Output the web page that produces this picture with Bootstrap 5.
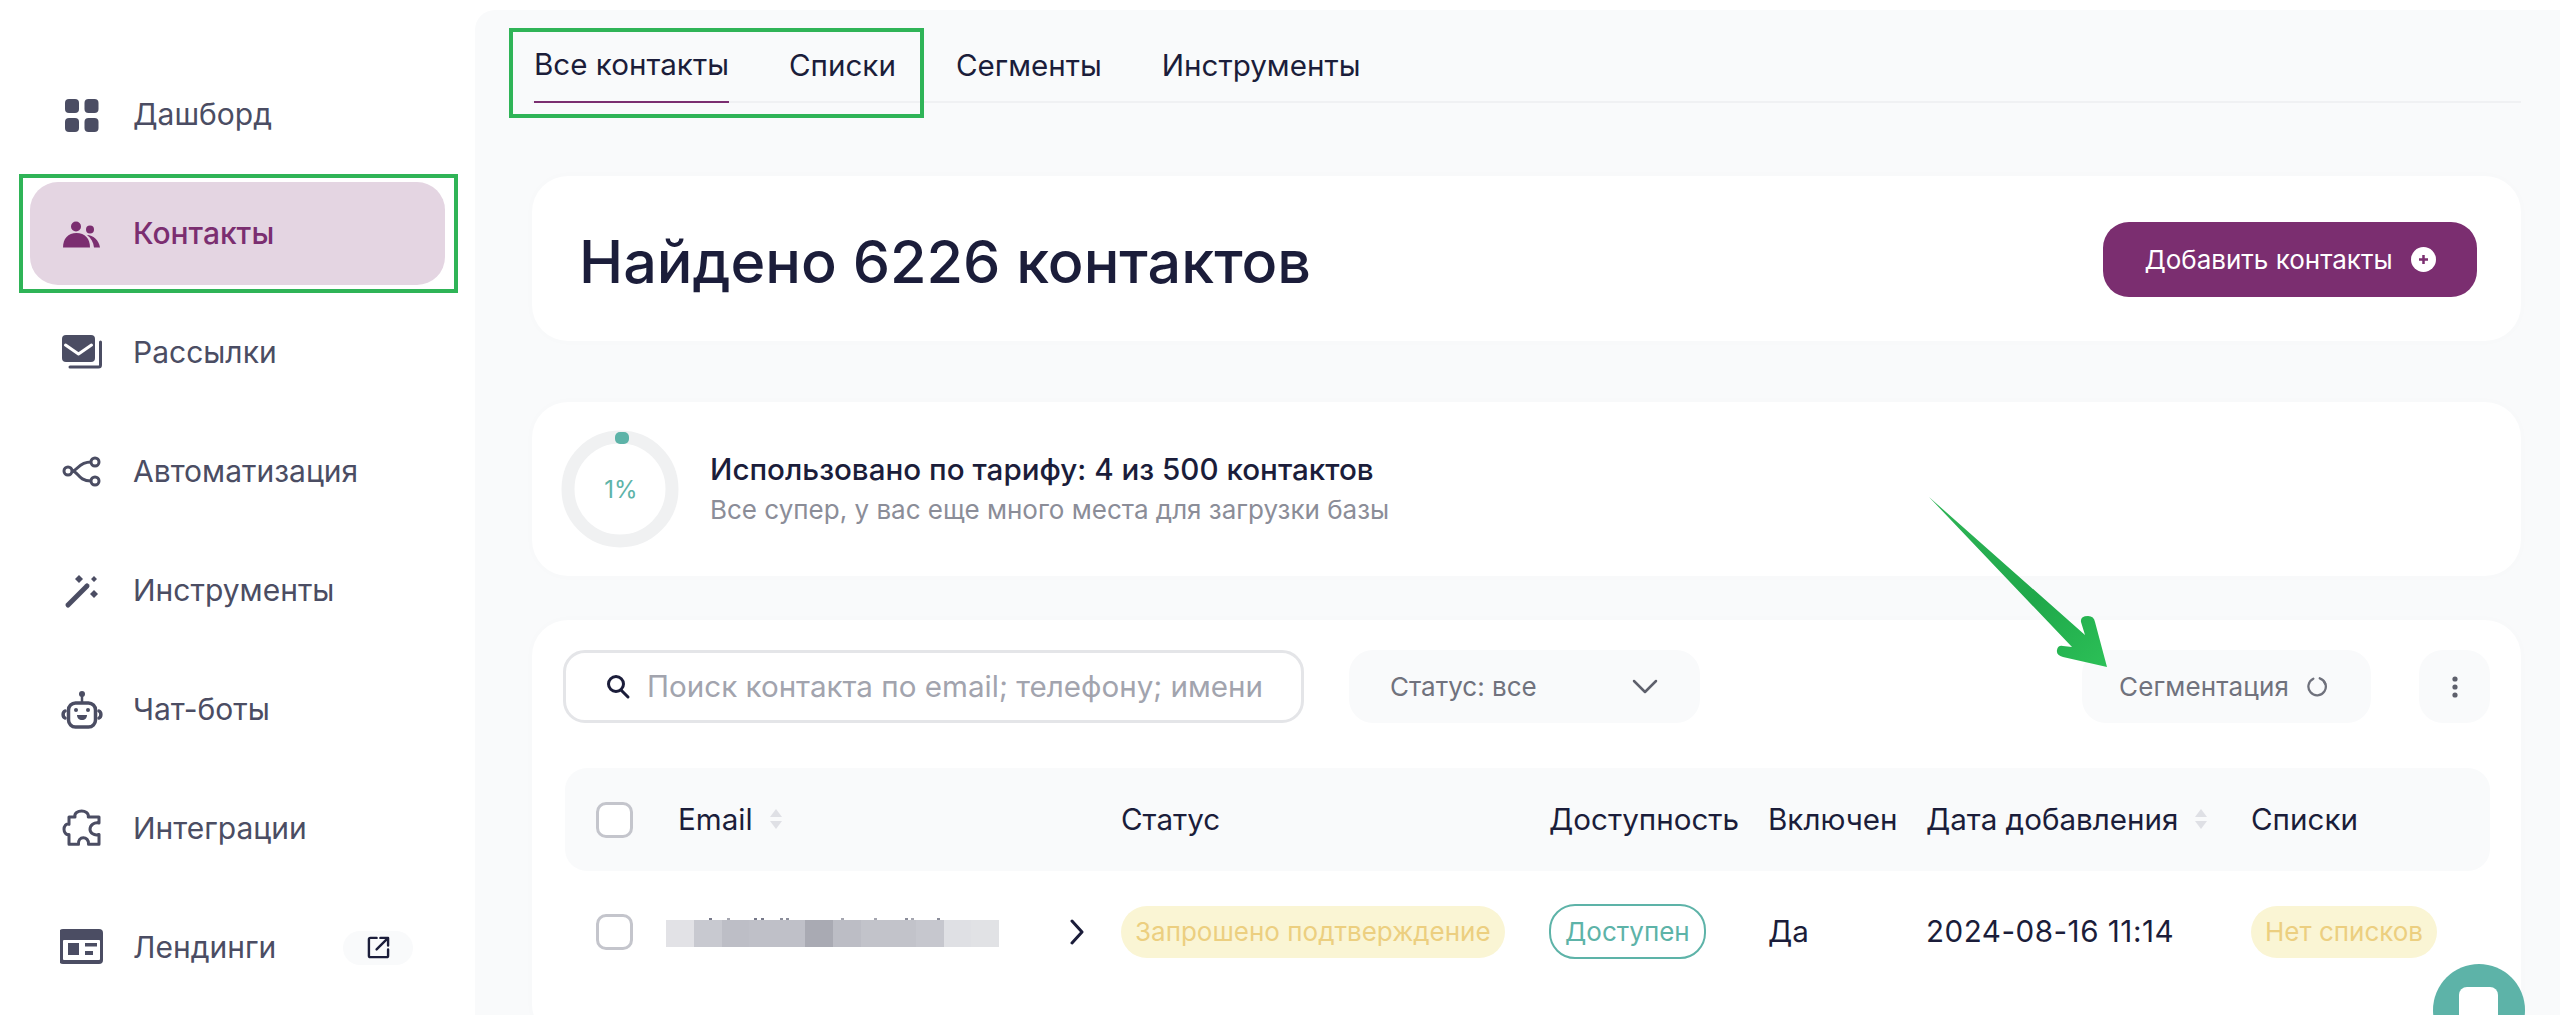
<!DOCTYPE html>
<html lang="ru">
<head>
    <meta charset="UTF-8">
    <meta name="viewport" content="width=device-width, initial-scale=1.0">
    <title>Контакты</title>
    <link href="https://cdn.jsdelivr.net/npm/bootstrap@5.3.0/dist/css/bootstrap.min.css" rel="stylesheet">
    <style>
        html, body { height: 1015px; overflow: hidden; }
        body { font-family: Inter, "Liberation Sans", sans-serif; color: #1b1d3a; background: #fff; position: relative; }
        svg { display: block; flex-shrink: 0; }

        .app-side { width: 475px; flex-shrink: 0; padding: 63px 30px 0; }
        .side-link { height: 103px; margin-bottom: 16px; padding-left: 30px; border-radius: 28px; color: #4b4d63; font-size: 30px; text-decoration: none; }
        .side-link.active-link { background: #e4d5e2; color: #7b2e70; font-weight: 500; }
        .side-ico { width: 44px; height: 44px; margin-right: 29px; color: #4b4d63; }
        .active-link .side-ico { color: #7b2e70; }
        .ext-chip { width: 70px; height: 34px; margin-left: auto; margin-right: 32px; border-radius: 17px; background: #f9fafb; color: #1b1d3a; }

        .app-main { background: #f9fafb; margin-top: 10px; padding: 0 39px 0 57px; border-top-left-radius: 20px; min-width: 0; }
        .tab-row { height: 93px; border-bottom: 2px solid #f0f1f3; gap: 60px; padding-left: 2px; }
        .tab-item { height: 93px; font-size: 29.6px; color: #1b1d3a; text-decoration: none; margin-bottom: -2px; padding-top: 18px; }
        .tab-item.on { border-bottom: 2px solid #7b2e70; }

        .soft-card { border: 0; border-radius: 36px; background: #fff; box-shadow: 0 0 12px rgba(30, 30, 60, .015); }
        .top-card { margin-top: 73px; height: 165px; padding: 0 44px 0 47px; }
        .top-title { font-size: 59.3px; font-weight: 500; margin: 6px 0 0; line-height: 1; }
        .add-btn { width: 374px; height: 75px; margin-top: 1px; border-radius: 26px; background: #7b2e70; border: 0; color: #fff; font-size: 26px; gap: 18px; }
        .add-btn:hover { background: #7b2e70; color: #fff; }

        .plan-card { margin-top: 61px; height: 174px; padding-left: 29px; }
        .donut { width: 118px; height: 118px; margin-right: 31px; }
        .plan-title { font-size: 29.6px; font-weight: 500; line-height: 36px; }
        .plan-note { font-size: 26px; color: #8b8d98; line-height: 36px; margin-top: 5px; }

        .list-card { margin-top: 44px; height: 420px; padding: 30px 31px 0 31px; }
        .tool-row { height: 73px; }
        .search-box { width: 741px; height: 73px; border: 3px solid #e4e5e8; border-radius: 22px; padding-left: 39px; gap: 16px; background: #fff; }
        .search-box input { border: 0; outline: 0; flex: 1; min-width: 0; padding: 0; font-size: 29.6px; background: transparent; color: #1b1d3a; }
        .search-box input::placeholder { color: #a2a4ae; opacity: 1; }
        .status-pick { width: 351px; height: 73px; margin-left: 45px; padding: 0 42px 0 41px; border-radius: 24px; background: #f9fafb; font-size: 26px; color: #70727d; }
        .seg-btn { width: 289px; height: 73px; margin-left: auto; padding-left: 37px; gap: 17px; border: 0; border-radius: 24px; background: #f9fafb; font-size: 26px; letter-spacing: .15px; color: #70727d; }
        .more-btn { width: 71px; height: 73px; margin-left: 48px; border: 0; border-radius: 24px; background: #f9fafb; color: #5e606c; }

        .contact-table { table-layout: fixed; width: 1925px; margin: 45px 0 0 2px; --bs-table-bg: transparent; }
        .contact-table th, .contact-table td { border: 0; padding: 0; vertical-align: middle; font-size: 29.6px; color: #1b1d3a; white-space: nowrap; }
        .contact-table th { height: 103px; background: #f9fafb; font-weight: 400; }
        .contact-table th:first-child { border-radius: 22px 0 0 22px; padding-left: 31px; }
        .contact-table th:last-child { border-radius: 0 22px 22px 0; }
        .contact-table td { height: 118px; padding-top: 3px; }
        .contact-table td:first-child { padding-left: 31px; }
        .date-cell { letter-spacing: .5px; }
        .fake-check { width: 37px; height: 36px; border: 3px solid #c4c5cc; border-radius: 10px; background: #fff; }
        .sort-mark { margin-left: 16px; }
        .mail-row { padding-right: 36px; }
        .mail-blur { position: relative; width: 333px; height: 27px; margin: 3px 0 0 -12px; background: linear-gradient(90deg, #e2e2e6 0 28px, #c8c9d0 28px 56px, #bdbec6 56px 83px, #bfc0c8 83px 139px, #a9aab3 139px 167px, #bcbdc5 167px 195px, #c2c3ca 195px 250px, #c6c7ce 250px 278px, #dfe0e4 278px 305px, #e1e2e5 305px 333px); }
        .mail-blur::before { content: ""; position: absolute; left: 0; right: 0; top: -2px; height: 2px; background: linear-gradient(90deg, transparent 43px, #77798a 43px 46px, transparent 46px 61px, #a5a6b0 61px 64px, transparent 64px 88px, #77798a 88px 91px, transparent 91px 95px, #77798a 95px 98px, transparent 98px 114px, #8b8d9a 114px 117px, transparent 117px 120px, #8b8d9a 120px 123px, transparent 123px 175px, #a5a6b0 175px 178px, transparent 178px 208px, #a5a6b0 208px 211px, transparent 211px 239px, #8b8d9a 239px 242px, transparent 242px 245px, #a5a6b0 245px 248px, transparent 248px 271px, #8b8d9a 271px 274px, transparent 274px); }
        .state-pill { height: 52px; padding: 0 14px; border-radius: 26px; font-size: 26px; font-weight: 400; }
        .state-wait { background: #faf5d4; color: #eccf80; }
        .state-ok { height: 55px; border: 2px solid #5db3a8; background: #fff; color: #5db3a8; padding: 0 14px; }

        .chat-bubble { position: absolute; left: 2433px; top: 964px; width: 92px; height: 92px; border-radius: 50%; background: #5db3a8; }
        .chat-bubble::after { content: ""; position: absolute; left: 26px; top: 23px; width: 39px; height: 46px; border-radius: 8px; background: #fff; }
        .mark-box { position: absolute; border: 4px solid #2fb457; pointer-events: none; }
        .mark-side { left: 19px; top: 174px; width: 439px; height: 119px; }
        .mark-tabs { left: 509px; top: 28px; width: 415px; height: 90px; }
        .mark-arrow { position: absolute; left: 1920px; top: 490px; }
    </style>
</head>
<body>
    <div class="d-flex h-100">
        <aside class="app-side">
            <a href="#" class="side-link d-flex align-items-center">
                <svg class="side-ico" viewBox="0 0 44 44" fill="currentColor"><rect x="5" y="6" width="14" height="14" rx="4"/><rect x="24.500" y="6" width="14" height="14" rx="4"/><rect x="5" y="25" width="14" height="14" rx="4"/><rect x="24.500" y="25" width="14" height="14" rx="4"/></svg>
                Дашборд
            </a>
            <a href="#" class="side-link active-link d-flex align-items-center">
                <svg class="side-ico" viewBox="0 0 44 44" fill="currentColor"><circle cx="16" cy="14.500" r="5"/><circle cx="30" cy="17.500" r="4"/><path d="M3 35.500c0-9 5-14.500 13.500-14.500S30 26.500 30 35.500z"/><path d="M27 23c6 0 12 5 13 12.500h-6c-.5-5-3-9.500-7-12.500z"/></svg>
                Контакты
            </a>
            <a href="#" class="side-link d-flex align-items-center">
                <svg class="side-ico" viewBox="0 0 44 44" fill="currentColor"><path d="M6 4h25a4 4 0 0 1 4 4v19a4 4 0 0 1-4 4H6a4 4 0 0 1-4-4V8a4 4 0 0 1 4-4z"/><path d="M5.500 14L18.500 23L31.500 14" fill="none" stroke="#fff" stroke-width="3" stroke-linecap="round" stroke-linejoin="round"/><path d="M40.500 11v23a2 2 0 0 1-2 2H10" fill="none" stroke="currentColor" stroke-width="3" stroke-linecap="round"/></svg>
                Рассылки
            </a>
            <a href="#" class="side-link d-flex align-items-center">
                <svg class="side-ico" viewBox="0 0 44 44" fill="none" stroke="currentColor" stroke-width="3"><circle cx="8" cy="21" r="4"/><circle cx="35" cy="12" r="4"/><circle cx="35" cy="31" r="4"/><path d="M12 21c6 0 6-9 19-9M12 21c6 0 6 10 19 10"/></svg>
                Автоматизация
            </a>
            <a href="#" class="side-link d-flex align-items-center">
                <svg class="side-ico" viewBox="0 0 44 44" fill="currentColor"><path d="M8 36L27 17" stroke="currentColor" stroke-width="5" stroke-linecap="round"/><path d="M19 6l4 4-4 4-4-4zM34 7l3 3-3 3-3-3zM34 21l4 4-4 4-4-4z"/></svg>
                Инструменты
            </a>
            <a href="#" class="side-link d-flex align-items-center">
                <svg class="side-ico" viewBox="0 0 44 44" fill="none" stroke="currentColor" stroke-width="3.500"><rect x="8.500" y="15" width="27" height="24" rx="7"/><path d="M22 8v7" stroke-width="2.500"/><circle cx="22" cy="6" r="3" fill="currentColor" stroke="none"/><path d="M5 23c-2.500 1-2.500 6 0 7M39 23c2.500 1 2.500 6 0 7" stroke-linecap="round"/><circle cx="16" cy="22" r="2" fill="currentColor" stroke="none"/><circle cx="28" cy="22" r="2" fill="currentColor" stroke="none"/><path d="M17 27h10c0 3-2 5-5 5s-5-2-5-5z" fill="currentColor" stroke="none"/></svg>
                Чат-боты
            </a>
            <a href="#" class="side-link d-flex align-items-center">
                <svg class="side-ico" viewBox="0 0 44 44" fill="none" stroke="currentColor" stroke-width="3" stroke-linejoin="round"><path d="M9 10H15C14 6 18 4 21.700 4C25 4 29 6 28.300 10H39V16C34 15 30 18 30 22.300C30 26 34 29 39 27.500V37.300H28.500C29 33 26 30.700 23.300 30.700C20.500 30.700 18 33 18.500 37.300H9V27.500C6 28.500 4 25 4 22.300C4 19.500 6 16 9 17.300Z"/></svg>
                Интеграции
            </a>
            <a href="#" class="side-link d-flex align-items-center">
                <svg class="side-ico" viewBox="0 0 44 44" fill="none"><rect x="-1" y="3" width="44" height="35" rx="4" fill="currentColor"/><rect x="3" y="14" width="37" height="20" rx="1" fill="#fff"/><rect x="8" y="17" width="11" height="12" fill="currentColor"/><rect x="25" y="17" width="12" height="3.500" fill="currentColor"/><rect x="25" y="25" width="8" height="4" fill="currentColor"/></svg>
                Лендинги
                <span class="ext-chip d-flex align-items-center justify-content-center">
                    <svg width="23" height="23" viewBox="0 0 24 24" fill="none" stroke="currentColor" stroke-width="2.500" stroke-linecap="round" stroke-linejoin="round"><path d="M10 2H3.500A1.500 1.500 0 0 0 2 3.500v17A1.500 1.500 0 0 0 3.500 22h17a1.500 1.500 0 0 0 1.500-1.500V14"/><path d="M10 14L21 3M14 2h8v8"/></svg>
                </span>
            </a>
        </aside>

        <main class="app-main flex-grow-1">
            <nav class="tab-row d-flex">
                <a href="#" class="tab-item on d-flex align-items-center">Все контакты</a>
                <a href="#" class="tab-item d-flex align-items-center">Списки</a>
                <a href="#" class="tab-item d-flex align-items-center">Сегменты</a>
                <a href="#" class="tab-item d-flex align-items-center">Инструменты</a>
            </nav>

            <section class="card soft-card top-card flex-row align-items-center justify-content-between">
                <h1 class="top-title">Найдено 6226 контактов</h1>
                <button class="btn add-btn d-flex align-items-center justify-content-center">
                    Добавить контакты
                    <svg width="25" height="25" viewBox="0 0 25 25"><circle cx="12.500" cy="12.500" r="12.500" fill="#fff"/><path d="M12.500 8v9M8 12.500h9" stroke="#7b2e70" stroke-width="2.500"/></svg>
                </button>
            </section>

            <section class="card soft-card plan-card flex-row align-items-center">
                <svg class="donut" viewBox="0 0 118 118">
                    <circle cx="59" cy="59" r="52" fill="none" stroke="#f0f1f2" stroke-width="13"/>
                    <rect x="54" y="2" width="14" height="12" rx="5" fill="#5db3a8"/>
                    <text x="60" y="68" text-anchor="middle" font-size="24" fill="#5db3a8">1%</text>
                </svg>
                <div>
                    <div class="plan-title">Использовано по тарифу: 4 из 500 контактов</div>
                    <div class="plan-note">Все супер, у вас еще много места для загрузки базы</div>
                </div>
            </section>

            <section class="card soft-card list-card">
                <div class="tool-row d-flex align-items-center">
                    <label class="search-box d-flex align-items-center m-0">
                        <svg width="26" height="26" viewBox="0 0 26 26" fill="none" stroke="#1b1d3a" stroke-width="3" stroke-linecap="round"><circle cx="11" cy="10" r="7.500"/><path d="M16 16l7 7"/></svg>
                        <input type="text" placeholder="Поиск контакта по email; телефону; имени">
                    </label>
                    <div class="status-pick d-flex align-items-center justify-content-between">
                        Статус: все
                        <svg width="26" height="15" viewBox="0 0 26 15" fill="none" stroke="#5e606c" stroke-width="2.500" stroke-linecap="round" stroke-linejoin="round"><path d="M2 2l11 11L24 2"/></svg>
                    </div>
                    <button class="seg-btn d-flex align-items-center">
                        Сегментация
                        <svg width="22" height="22" viewBox="0 0 24 24" fill="none" stroke="#6f717c" stroke-width="2.500" stroke-linecap="round"><path d="M15 2.500a9.500 9.500 0 1 1-7 .5"/><path d="M19.500 6l1.500 2.500"/></svg>
                    </button>
                    <button class="more-btn d-flex align-items-center justify-content-center">
                        <svg width="6" height="24" viewBox="0 0 6 24" fill="currentColor"><circle cx="3" cy="4" r="2.600"/><circle cx="3" cy="12" r="2.600"/><circle cx="3" cy="20" r="2.600"/></svg>
                    </button>
                </div>

                <table class="table contact-table">
                    <colgroup><col style="width:113px"><col style="width:443px"><col style="width:428px"><col style="width:219px"><col style="width:158px"><col style="width:325px"><col style="width:239px"></colgroup>
                    <thead>
                        <tr>
                            <th><div class="fake-check"></div></th>
                            <th><span class="d-inline-flex align-items-center">Email
                                <svg class="sort-mark" width="14" height="24" viewBox="0 0 14 24" fill="#dfe0e5"><path d="M7 2l6 8H1zM7 22l-6-8h12z"/></svg></span></th>
                            <th>Статус</th>
                            <th>Доступность</th>
                            <th>Включен</th>
                            <th><span class="d-inline-flex align-items-center">Дата добавления
                                <svg class="sort-mark" width="14" height="24" viewBox="0 0 14 24" fill="#dfe0e5"><path d="M7 2l6 8H1zM7 22l-6-8h12z"/></svg></span></th>
                            <th>Списки</th>
                        </tr>
                    </thead>
                    <tbody>
                        <tr>
                            <td><div class="fake-check"></div></td>
                            <td>
                                <div class="mail-row d-flex align-items-center justify-content-between">
                                    <div class="mail-blur"></div>
                                    <svg width="16" height="26" viewBox="0 0 16 26" fill="none" stroke="#1b1d3a" stroke-width="3" stroke-linecap="round" stroke-linejoin="round"><path d="M3 2l10 11L3 24"/></svg>
                                </div>
                            </td>
                            <td><span class="badge state-pill state-wait d-inline-flex align-items-center">Запрошено подтверждение</span></td>
                            <td><span class="badge state-pill state-ok d-inline-flex align-items-center">Доступен</span></td>
                            <td>Да</td>
                            <td class="date-cell">2024-08-16 11:14</td>
                            <td><span class="badge state-pill state-wait d-inline-flex align-items-center">Нет списков</span></td>
                        </tr>
                    </tbody>
                </table>
            </section>
        </main>
    </div>

    <div class="chat-bubble"></div>
    <div class="mark-box mark-side"></div>
    <div class="mark-box mark-tabs"></div>
    <svg class="mark-arrow" width="200" height="190" viewBox="1920 490 200 190">
        <defs><linearGradient id="arrowFill" x1="0" y1="0" x2="1" y2="1"><stop offset="0" stop-color="#2fb457"/><stop offset=".6" stop-color="#1fa84a"/><stop offset="1" stop-color="#2cc057"/></linearGradient></defs>
        <path d="M1929 497L2085 635L2081 622Q2080 616 2088 616Q2094 616 2095 622L2107 667L2063 657Q2056 655 2057 650Q2058 645 2063 646L2072 647Z" fill="url(#arrowFill)"/>
    </svg>

    <script src="https://cdn.jsdelivr.net/npm/bootstrap@5.3.0/dist/js/bootstrap.bundle.min.js"></script>
</body>
</html>
